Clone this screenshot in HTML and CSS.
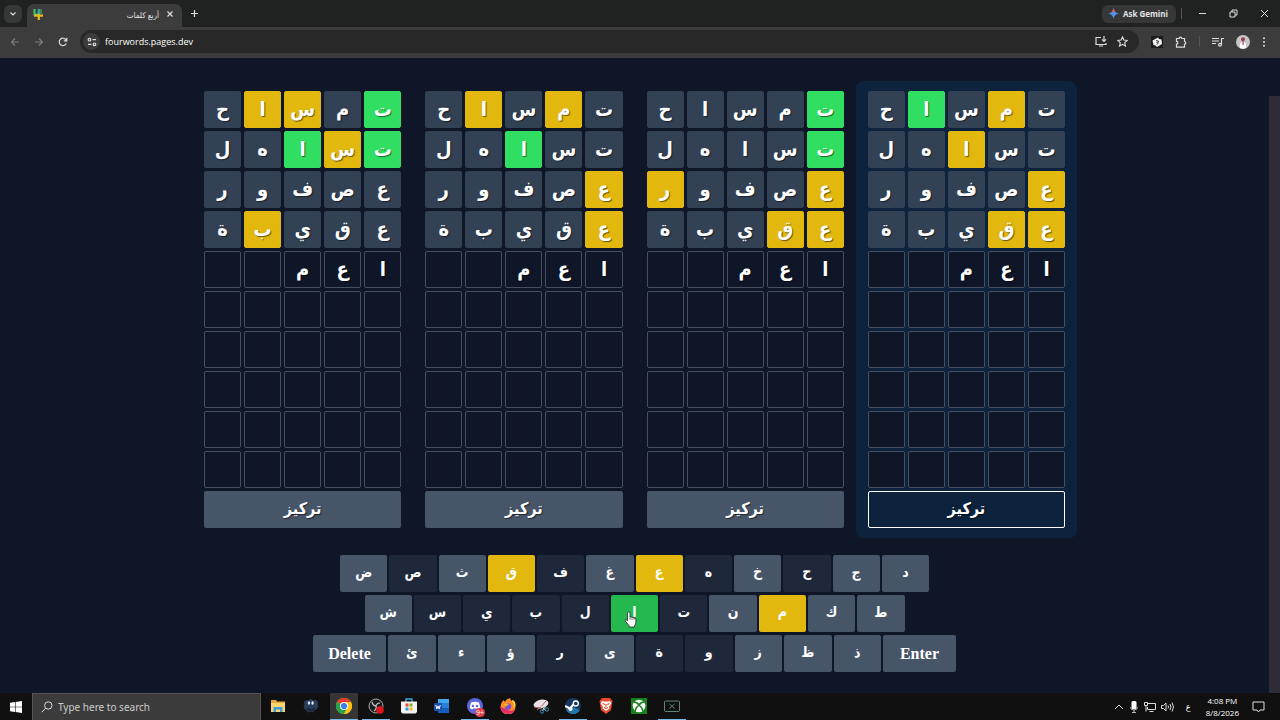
FILE: index.html
```
<!DOCTYPE html>
<html lang="en">

<head>
  <meta charset="UTF-8">
  <meta name="viewport" content="width=device-width, initial-scale=1.0">
  <title>أربع كلمات</title>
  <link rel="stylesheet" href="styles.css">
</head>

<body>
  <header class="tabstrip">
    <button class="tab-search" aria-label="Search tabs">
      <svg width="8" height="8" viewBox="0 0 8 8" class="line"><path d="M1.500 2.500 4 5l2.500-2.500"/></svg>
    </button>
    <div class="tab">
      <svg width="10" height="11" viewBox="0 0 10 11" fill="none" stroke-width="2.200">
        <path d="M1.500 0v5.500H5" stroke="#3fc46e"/><path d="M5.800 0v6" stroke="#35b5a0"/><path d="M1 6.600h9M5.800 5v6" stroke="#e6b822"/><path d="M8 0v5" stroke="#3fc46e" stroke-width="1"/>
      </svg>
      <span class="tab-title" dir="rtl">أربع كلمات</span>
      <button class="plain" aria-label="Close tab">
        <svg width="8" height="8" viewBox="0 0 8 8" class="line"><path d="m1.500 1.500 5 5m0-5-5 5"/></svg>
      </button>
    </div>
    <button class="plain new-tab" aria-label="New tab">
      <svg width="9" height="9" viewBox="0 0 9 9" class="line"><path d="M4.500 1v7M1 4.500h7"/></svg>
    </button>
    <button class="gemini">
      <svg width="11" height="11" viewBox="0 0 12 12">
        <defs><linearGradient id="gem"><stop offset="0" stop-color="#49b36b"/><stop offset=".35" stop-color="#4c8df6"/><stop offset="1" stop-color="#5b9bf5"/></linearGradient></defs>
        <path d="M6 0q.8 5.200 6 6-5.200.8-6 6-.8-5.200-6-6 5.200-.8 6-6z" fill="url(#gem)"/><path d="M6 0q.4 2.600 1.800 4.200L6 5 4.300 4.200Q5.600 2.600 6 0z" fill="#ea5a50"/>
      </svg>
      Ask Gemini
    </button>
    <i class="divider"></i>
    <div class="window-buttons">
      <button class="plain" aria-label="Minimize"><svg width="9" height="9" viewBox="0 0 9 9" class="thin"><path d="M1 4.500h7"/></svg></button>
      <button class="plain" aria-label="Restore"><svg width="9" height="9" viewBox="0 0 9 9" class="thin"><path d="M1 3h5v5H1zM3 3V1h5v5H6"/></svg></button>
      <button class="plain" aria-label="Close"><svg width="9" height="9" viewBox="0 0 9 9" class="thin"><path d="m1 1 7 7m0-7L1 8"/></svg></button>
    </div>
  </header>

  <nav class="toolbar">
    <div class="nav-buttons">
      <button class="plain off" aria-label="Back"><svg width="10" height="10" viewBox="0 0 10 10" class="line"><path d="M9 5H1.500M5 1.500 1.500 5 5 8.500"/></svg></button>
      <button class="plain off" aria-label="Forward"><svg width="10" height="10" viewBox="0 0 10 10" class="line"><path d="M1 5h7.500M5 1.500 8.500 5 5 8.500"/></svg></button>
      <button class="plain" aria-label="Reload"><svg width="10" height="10" viewBox="0 0 10 10" class="line"><path d="M8.300 6.500A3.700 3.700 0 1 1 8 2.800L8.600 3.500M8.800.8v3H5.800"/></svg></button>
    </div>
    <div class="address">
      <button class="site-info" aria-label="Site information">
        <svg width="10" height="10" viewBox="0 0 10 10" class="line"><circle cx="2.500" cy="2.700" r="1.300"/><path d="M5.500 2.700h3.500M1 7.300h3.500"/><circle cx="7.500" cy="7.300" r="1.300"/></svg>
      </button>
      <input class="url" type="text" value="fourwords.pages.dev" aria-label="Address">
      <button class="plain" aria-label="Install app"><svg width="12" height="11" viewBox="0 0 12 11" class="line"><path d="M6 1.500H1v7h10V7M4 10h4M9 0v5M7 3.300l2 2 2-2"/></svg></button>
      <button class="plain" aria-label="Bookmark"><svg width="11" height="11" viewBox="0 0 12 12" class="line"><path d="m6 1 1.500 3.400 3.700.4-2.800 2.500.8 3.700L6 9.100 2.800 11l.8-3.700L.8 4.800l3.700-.4z"/></svg></button>
    </div>
    <button class="plain" aria-label="Extension"><svg width="12" height="12" viewBox="0 0 12 12"><path fill="#1c1c1c" d="M0 0h12v12H0z"/><path d="M1.500 4.500 7 1.500l1 1.500 2.500.500.5 4.500-5 3-1.500-1.500-2-.5z" fill="#f4f4f4"/><path d="m5 4.500 2.500.5v1.200H5.800L7 7.500 5.500 8.500" stroke="#333" stroke-width=".9" fill="none"/></svg></button>
    <button class="plain" aria-label="Extensions"><svg width="12" height="12" viewBox="0 0 12 12" class="line"><path d="M1.500 2.500H4.200a1.300 1.300 0 0 1 2.600 0H9.500v3a1.300 1.300 0 0 1 0 2.600v3h-8V8.200a1.400 1.400 0 0 0 0-2.800z"/></svg></button>
    <i class="divider"></i>
    <button class="plain" aria-label="Media"><svg width="12" height="10" viewBox="0 0 12 10" class="line"><path d="M0 1.500h7M0 4h7M0 6.500h4M9.500 7.500V1.500H12"/><circle cx="8" cy="7.700" r="1.400"/></svg></button>
    <button class="plain" aria-label="Profile"><svg width="14" height="14" viewBox="0 0 14 14"><circle cx="7" cy="7" r="7" fill="#c9c4c6"/><path d="M4 13q-1-6 3-6t3 6q-3 1.500-6 0z" fill="#fff"/><circle cx="7" cy="4.300" r="2" fill="#8c4650"/><path d="M6.500 6h1.200v4H6.500z" fill="#a34b58"/></svg></button>
    <button class="plain" aria-label="Menu"><svg width="4" height="10" viewBox="0 0 4 10" fill="#ddd"><circle cx="2" cy="1.200" r="1"/><circle cx="2" cy="5" r="1"/><circle cx="2" cy="8.800" r="1"/></svg></button>
  </nav>

  <div class="viewport">
    <main class="game">
      <div class="boards" id="boards"></div>
      <div class="keyboard" id="keyboard"></div>
    </main>
    <div class="scrollbar"><div class="thumb"></div></div>
  </div>

  <footer class="taskbar">
    <button class="start" aria-label="Start"><svg width="12" height="12" viewBox="0 0 12 12" fill="#fff"><path d="m0 1.700 5-.7v4.700H0zM5.600.9 12 0v5.700H5.600zM0 6.300h5V11l-5-.7zM5.600 6.300H12V12l-6.400-.9z"/></svg></button>
    <label class="search">
      <svg width="12" height="12" viewBox="0 0 12 12" class="thin"><circle cx="7.300" cy="4.500" r="3.700"/><path d="M4.700 7.200.8 11.200"/></svg>
      <input type="text" placeholder="Type here to search" aria-label="Search">
    </label>
    <div class="apps">
      <button aria-label="File Explorer"><svg width="16" height="16" viewBox="0 0 16 16"><path d="M1 2h5l1 1.500h8V14H1z" fill="#e9a93a"/><path d="M1 5h14v9H1z" fill="#fbd66b"/><path d="M3.500 14V9h9v5h-2.500v-2.500H6V14z" fill="#3e9bdc"/></svg></button>
      <button aria-label="Owl"><svg width="16" height="16" viewBox="0 0 16 16"><path d="m1 4 2-2 2 .5L8 1l3 1.500 2-.5 2 2-.5 3 1 1-2 3.500-2 .5-1 2.500-2.500-1L5 14.500l-1.500-2-2-1.500L.5 8l1-1z" fill="#2b3f5c"/><path d="m3 11 2.500-1.500L8 11l2.500-1.500L13 11l-2.500 2.500h-5z" fill="#1b2940"/><ellipse cx="6" cy="5" rx="1.200" ry="1.700" fill="#dcebfa"/><ellipse cx="9.600" cy="5" rx="1.200" ry="1.700" fill="#dcebfa"/></svg></button>
      <button class="open active" aria-label="Chrome"><svg width="16" height="16" viewBox="0 0 16 16"><circle cx="8" cy="8" r="8" fill="#fbc116"/><path d="M8 8 1.070 4A8 8 0 0 1 14.930 4z" fill="#e33b2e"/><path d="M8 8 1.070 4A8 8 0 0 0 8 16l3.500-6z" fill="#25a44b"/><path d="M8 4h6.930A8 8 0 0 1 8 16l3.500-6z" fill="#fbc116"/><circle cx="8" cy="8" r="4" fill="#fff"/><circle cx="8" cy="8" r="3.100" fill="#3b7ded"/></svg></button>
      <button class="open" aria-label="OBS"><svg width="16" height="16" viewBox="0 0 16 16"><circle cx="8" cy="8" r="7" fill="#1d1d20" stroke="#aaa"/><path d="M4 4q1 4 4.500 4M12 5q-4 0-4 4M6 13q3-2 2-5" stroke="#c8c8c8" stroke-width="1.200" fill="none"/><circle cx="12" cy="12" r="3.800" fill="#e0161b"/></svg></button>
      <button aria-label="Store"><svg width="16" height="16" viewBox="0 0 16 16"><path d="M5 4V1h6v3" stroke="#35a6df" stroke-width="1.400" fill="none"/><path d="M0 3.500h16V14l-1.500 1.500h-13L0 14z" fill="#f2f2f2"/><path d="M4.500 5.500h3v3h-3z" fill="#e64f2c"/><path d="M8.500 5.500h3v3h-3z" fill="#75b92c"/><path d="M4.500 9.500h3v3h-3z" fill="#2ea1e4"/><path d="M8.500 9.500h3v3h-3z" fill="#f6b720"/></svg></button>
      <button aria-label="Word"><svg width="16" height="16" viewBox="0 0 16 16"><path d="M4 1h11v5H4z" fill="#43a6ee"/><path d="M4 5h11v5H4z" fill="#2a7fd9"/><path d="M4 10h11v5H4z" fill="#1a5cbb"/><rect y="5" width="8" height="8" rx="1" fill="#1951ae"/><path d="m1.800 7 1 4L4 8l1.200 3 1-4" stroke="#fff" fill="none"/></svg></button>
      <button class="open" aria-label="Discord, 9+ notifications"><svg width="16" height="16" viewBox="0 0 16 16"><circle cx="8" cy="8" r="8" fill="#5966dc"/><path d="M4 4.500Q8 3 12 4.500l1.400 5.500-2.600 1.500-1-1H6.200l-1 1L2.600 10z" fill="#fff"/><circle cx="6" cy="8" r="1.200" fill="#5966dc"/><circle cx="10" cy="8" r="1.200" fill="#5966dc"/></svg><span class="badge">9+</span></button>
      <button aria-label="Firefox"><svg width="16" height="16" viewBox="0 0 16 16"><path d="M2 4 3.500 2 5 4q1-3 5-4 0 2 2 3l.5-1Q16 5 15.500 9A7.500 7.500 0 0 1 .5 9Q.5 6 2 4z" fill="#ff8b23"/><path d="M10 0q0 2 2 3 3 3 1 7 2-1 2.500-3 0-4-3-5l-.5 1q-2-1-2-3z" fill="#ffda3c"/><path d="M.5 9A7.500 7.500 0 0 0 15 11q-3 3-7 1T.5 9z" fill="#e82c6b"/><circle cx="8" cy="8.500" r="3.200" fill="#7951d5"/><path d="M4 6q3-2 5 1-3 0-3 2-2-1-2-3z" fill="#ffb32a"/></svg></button>
      <button aria-label="Snipping Tool"><svg width="16" height="16" viewBox="0 0 16 16"><ellipse cx="8" cy="6" rx="7.500" ry="4.300" fill="#e8e2e5" transform="rotate(-12 8 6)"/><path d="m1 9 6 1 6-7M4 12l3-2" stroke="#bd5966" fill="none"/><path d="m8 8 5 5M13 8l-4 5" stroke="#c9d3d8"/><circle cx="9" cy="13.500" r="1.700" fill="none" stroke="#3f8fb5"/><circle cx="14" cy="11.500" r="1.700" fill="none" stroke="#3f8fb5"/></svg></button>
      <button class="open" aria-label="Steam"><svg width="16" height="16" viewBox="0 0 16 16"><circle cx="8" cy="8" r="8" fill="#15375f"/><path d="M1 11.800A8 8 0 0 0 15 12L8 9z" fill="#2476aa"/><path d="m0 8 5 2.500L9 6" stroke="#fff" stroke-width="2.200" fill="none"/><circle cx="10.800" cy="5.500" r="2.500" fill="#15375f" stroke="#fff" stroke-width="1.300"/><circle cx="5.500" cy="11" r="2" fill="#fff"/></svg></button>
      <button aria-label="Brave"><svg width="16" height="16" viewBox="0 0 16 16"><path d="M4 0h8l2.500 3L13 12l-5 4-5-4L1.500 3z" fill="#ee492c"/><path d="m4 3 2 .6h4L12 3l1.300 2.500L11 9l.5 1.500L8 13l-3.500-2.500L5 9 2.700 5.500z" fill="#fff"/><path d="M4.500 5.500 7 6.500M11.500 5.500 9 6.500M8 6v3M6 9.500l2 1 2-1" stroke="#ee492c" stroke-width="1.100" fill="none"/></svg></button>
      <button aria-label="Xbox"><svg width="16" height="16" viewBox="0 0 16 16"><path d="M0 0h16v16H0z" fill="#16801d"/><circle cx="8" cy="8" r="6.300" fill="#fff"/><path d="M4 13.500Q4.500 9.500 8 7q3.500 2.500 4 6.500M3 4q3 0 5 3 2-3 5-3" stroke="#16801d" stroke-width="1.500" fill="none"/></svg></button>
      <button class="open" aria-label="Xbox Game Bar"><svg width="16" height="16" viewBox="0 0 16 16" fill="none" stroke="#5f837b"><rect x=".5" y="3" width="15" height="10.500" rx="1"/><path d="m5.500 6 5 4.500m0-4.500-5 4.500"/></svg></button>
    </div>
    <div class="tray">
      <svg width="10" height="10" viewBox="0 0 10 10" class="thin"><path d="m1 7 4-4 4 4"/></svg>
      <svg width="10" height="12" viewBox="0 0 10 12"><rect x="2.500" width="5" height="8" rx="1.500" fill="#fff"/><path d="M1.500 6q0 3 3.500 3t3.500-3M5 9v2.500M3 11.500h4" stroke="#bbb" fill="none"/></svg>
      <svg width="12" height="12" viewBox="0 0 12 12" class="thin"><path d="M4 2.500h7.500v6H3.500V6M5.500 10.500h4M.5 1.500h3v3h-3zM2 4.500v6"/></svg>
      <svg width="13" height="12" viewBox="0 0 13 12" class="thin"><path d="M.5 4.500H2.500L5 2v8L2.500 7.500h-2zM7 4.500q1 1.500 0 3M9 3q2 3 0 6M11 1.500q3 4.500 0 9"/></svg>
      <span class="lang">ع</span>
      <time class="clock">4:08 PM<br>8/8/2026</time>
      <svg width="13" height="12" viewBox="0 0 13 12" class="thin"><path d="M1 1h11v8H8L6.500 11 5 9H1z"/></svg>
    </div>
  </footer>

  <svg class="pointer" width="13" height="17" viewBox="0 0 13 17"><path d="M3.500 9V2.200q0-1.400 1.200-1.400T6 2.200V6q1.200-.6 2 .4 1.200-.5 2 .6 1.700-.3 1.900 1.300V11q0 2-1.300 3.500V16H5v-1.500L1.200 10Q.7 8.800 1.600 8.600t1.900 1.400z" fill="#fff" stroke="#222" stroke-width=".8"/><path d="M6 6v3M8 6.500V9M10 7v2" stroke="#333" stroke-width=".6"/></svg>

  <script>
    const ROWS = 10, COLS = 5;
    const guesses = ["تمساح", "تساهل", "عصفور", "عقيبة", "اعم"];
    // one string per guess, first letter first: g = right place, y = wrong place, x = not in the word
    const boards = [
      { marks: ["gxyyx", "gygxx", "xxxxx", "xxxyx"] },
      { marks: ["xyxyx", "xxgxx", "yxxxx", "yxxxx"] },
      { marks: ["gxxxx", "gxxxx", "yxxxy", "yyxxx"] },
      { marks: ["xyxgx", "xxyxx", "yxxxx", "yyxxx"], focused: true }
    ];
    const layout = [
      ["ض", "ص", "ث", "ق", "ف", "غ", "ع", "ه", "خ", "ح", "ج", "د"],
      ["ش", "س", "ي", "ب", "ل", "ا", "ت", "ن", "م", "ك", "ط"],
      ["Delete", "ئ", "ء", "ؤ", "ر", "ى", "ة", "و", "ز", "ظ", "ذ", "Enter"]
    ];
    const names = { g: "correct", y: "present", x: "absent" };
    const keyState = { "ا": "correct", "ق": "present", "ع": "present", "م": "present" };
    for (const ch of "صفهحسيبلترةو") keyState[ch] = "absent";

    function boardHTML(board) {
      let cells = "";
      for (let r = 0; r < ROWS; r++) {
        for (let c = 0; c < COLS; c++) {
          const mark = board.marks[r] ? names[board.marks[r][c]] : "";
          cells += `<div class="cell ${mark}">${(guesses[r] || "")[c] || ""}</div>`;
        }
      }
      return `<section class="board ${board.focused ? "focused" : ""}" dir="rtl">
        ${cells}<button class="focus-btn">تركيز</button></section>`;
    }

    function keyHTML(k) {
      return `<button class="key ${keyState[k] || ""} ${k.length > 1 ? "wide" : ""}">${k}</button>`;
    }

    document.getElementById("boards").innerHTML = boards.map(boardHTML).join("");
    document.getElementById("keyboard").innerHTML = layout.map((row, i) =>
      `<div class="key-row row-${i + 1}">${row.map(keyHTML).join("")}</div>`).join("");
  </script>
</body>

</html>
```

FILE: styles.css
```
* {
  box-sizing: border-box;
}

body {
  margin: 0;
  height: 100vh;
  display: flex;
  flex-direction: column;
  overflow: hidden;
  background: #0f1628;
  color: #fff;
  font-family: "Open Sans", "Noto Sans", "DejaVu Sans Condensed", "DejaVu Sans", sans-serif;
  font-size: 9px;
}

button,
input {
  font: inherit;
  color: inherit;
  border: 0;
  padding: 0;
  background: none;
}

svg {
  display: block;
  flex: none;
}

.line,
.thin {
  fill: none;
  stroke: #dcdcdc;
  stroke-width: 1.2;
}

.thin {
  stroke-width: 1;
}

.plain {
  display: grid;
  place-items: center;
}

.off {
  opacity: .4;
}

.divider {
  width: 1px;
  height: 11px;
  background: #555;
}

/* browser frame */
.tabstrip {
  display: flex;
  align-items: center;
  height: 27px;
  padding: 0 11px 0 4px;
  background: #202221;
}

.tab-search {
  display: grid;
  place-items: center;
  width: 18px;
  height: 18px;
  border-radius: 6px;
  background: #363837;
}

.tab {
  display: flex;
  align-items: center;
  align-self: flex-end;
  width: 155px;
  height: 23px;
  margin-left: 5px;
  padding: 0 8px 3px 6px;
  border-radius: 7px 7px 0 0;
  background: #3c3c3c;
}

.tab-title {
  flex: 1;
  padding-left: 7px;
  margin-right: 7px;
  color: #e4e4e4;
  font-size: 8px;
}

.new-tab {
  margin-left: 8px;
}

.gemini {
  display: flex;
  align-items: center;
  gap: 4px;
  height: 18px;
  margin: 0 5px 0 auto;
  padding: 0 8px 0 6px;
  border-radius: 6px;
  background: #373737;
  color: #e4e4e4;
  font-size: 8px;
  font-weight: bold;
}

.window-buttons {
  display: flex;
  gap: 22px;
  margin-left: 16px;
}

.toolbar {
  display: flex;
  align-items: center;
  gap: 12px;
  height: 31px;
  padding: 0 14px 2px 10px;
  background: #3c3c3c;
}

.nav-buttons {
  display: flex;
  gap: 14px;
}

.address {
  flex: 1;
  display: flex;
  align-items: center;
  gap: 10px;
  height: 23px;
  padding: 0 11px 0 3px;
  border-radius: 12px;
  background: #282828;
}

.site-info {
  display: grid;
  place-items: center;
  width: 17px;
  height: 17px;
  border-radius: 50%;
  background: #3c3c3c;
}

.url {
  flex: 1;
  margin-left: -5px;
}

/* game */
.viewport {
  flex: 1;
  display: flex;
  min-height: 0;
}

.game {
  flex: 1;
  padding-top: 23px;
  font-family: "Liberation Serif", "DejaVu Sans Condensed", "DejaVu Sans", serif;
  font-weight: bold;
}

.boards {
  display: grid;
  grid-template-columns: repeat(4, 1fr);
  max-width: 885px;
  margin: 0 auto;
}

.board {
  display: grid;
  grid-template-columns: repeat(5, 1fr);
  grid-auto-rows: 37px;
  gap: 3px;
  padding: 10px 12px;
  border-radius: 8px;
}

.board.focused {
  background: #0d223c;
}

.cell {
  display: grid;
  place-items: center;
  padding-bottom: 2px;
  border: 1px solid #475061;
  border-radius: 2px;
  background: #0f1628;
  font-size: 20px;
  line-height: 24px;
  text-shadow: 1px 1px 1px #0008;
}

.cell.absent {
  background: #334155;
  border-color: #334155;
}

.cell.present,
.key.present {
  background: #e2b80f;
  border-color: #e2b80f;
}

.cell.correct {
  background: #30df62;
  border-color: #30df62;
}

.focus-btn {
  grid-column: 1 / -1;
  padding-bottom: 2px;
  border-radius: 2px;
  background: #475569;
  font-size: 16px;
  text-shadow: 1px 1px 1px #0008;
}

.focused .focus-btn {
  border: 1px solid #fff;
  background: #0d223c;
}

.keyboard {
  display: grid;
  gap: 3px;
  justify-items: center;
  margin-top: 17px;
}

.key-row {
  display: grid;
  grid-auto-flow: column;
  grid-auto-columns: 1fr;
  gap: 2px;
  width: 100%;
  height: 37px;
}

.row-1 {
  max-width: 589px;
}

.row-2 {
  max-width: 540px;
}

.row-3 {
  max-width: 643px;
  grid-template-columns: 73px repeat(10, 1fr) 73px;
}

.key {
  padding-bottom: 2px;
  border-radius: 2px;
  background: #475569;
  font-size: 14px;
  line-height: 20px;
}

.key.wide {
  padding-bottom: 0;
  font-size: 16px;
}

.key.absent {
  background: #1f283a;
}

.key.correct {
  background: #25b84e;
}

.scrollbar {
  width: 11px;
  padding-top: 38px;
}

.thumb {
  height: 100%;
  background: #2d2c37;
}

/* taskbar */
.taskbar {
  display: flex;
  align-items: stretch;
  height: 27px;
  background: #101010;
}

.start {
  display: grid;
  place-items: center;
  width: 32px;
}

.search {
  display: flex;
  align-items: center;
  gap: 5px;
  width: 229px;
  padding-left: 8px;
  border: 1px solid #555;
  border-bottom: 0;
  background: #3b3b3b;
}

.search input {
  flex: 1;
  font-family: "Noto Sans", sans-serif;
  font-size: 10px;
}

.search input::placeholder {
  color: #ccc;
}

.apps {
  display: flex;
  justify-content: space-between;
  width: 422px;
  margin-left: 3px;
}

.apps button {
  position: relative;
  display: grid;
  place-items: center;
  width: 28px;
  border-bottom: 1px solid transparent;
}

.apps .open {
  border-bottom-color: #76b9ed;
}

.apps .active {
  background: #353535;
}

.badge {
  position: absolute;
  right: 4px;
  bottom: 2px;
  padding: 0 1px;
  border-radius: 5px;
  background: #e0404a;
  font-size: 7px;
  line-height: 9px;
}

.tray {
  display: flex;
  align-items: center;
  gap: 5px;
  margin-left: auto;
  padding-right: 15px;
}

.lang {
  margin: 0 10px 0 7px;
}

.clock {
  margin-right: 8px;
  font-size: 8px;
  line-height: 12px;
  text-align: center;
}

.pointer {
  position: absolute;
  left: 624px;
  top: 611px;
}
```
